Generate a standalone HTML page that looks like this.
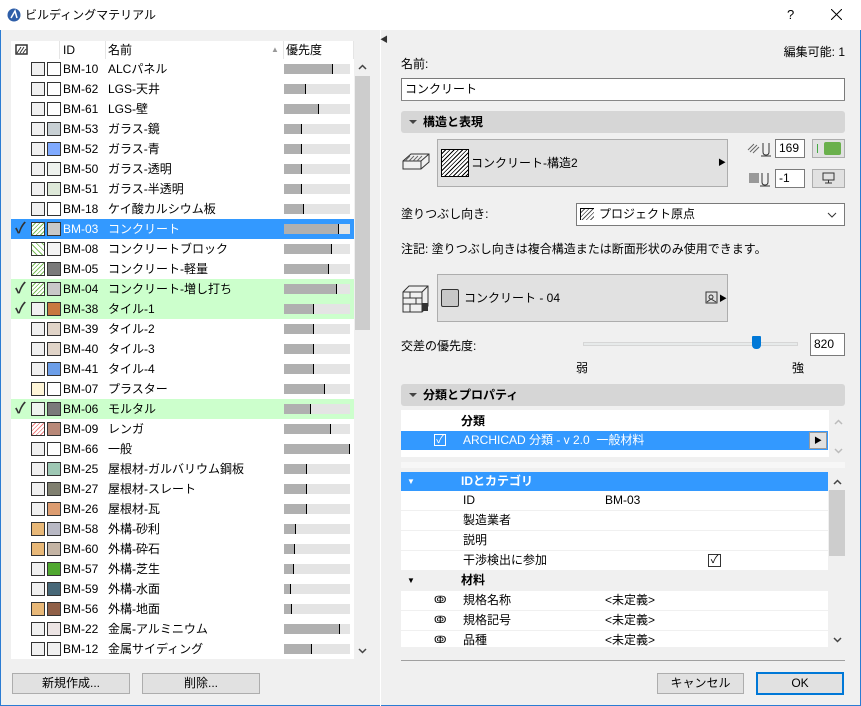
<!DOCTYPE html>
<html><head><meta charset="utf-8"><style>
*{margin:0;padding:0;box-sizing:border-box}
body{width:861px;height:706px;overflow:hidden;background:#f0f0f0;font-family:"Liberation Sans","Noto Sans CJK JP",sans-serif;font-size:12px;color:#000;position:relative}
.a{position:absolute;line-height:16px;white-space:nowrap}
#win{position:absolute;left:0;top:0;width:861px;height:706px;border:1px solid #2b7cd3;border-top:none}
.r{position:absolute;left:11px;width:343px;height:20px}
.ck{position:absolute;left:4px;top:1px;font-size:15px;line-height:18px;color:#333;font-weight:bold}
.s{position:absolute;top:3px;width:14px;height:14px;border:1px solid #333;background:#f0f0f0}
.s1{left:20px}.s2{left:36px}
.id{position:absolute;left:52px;top:2px;line-height:16px}
.nm{position:absolute;left:97px;top:2px;line-height:16px;white-space:nowrap}
.bar{position:absolute;left:273px;top:5px;width:66px;height:10px;background:#e4e4e4}
.bar i{display:block;height:10px;background:#b0b0b0;border-right:1px solid #000}
.sel{background:#3399ff;color:#fff}.sel .ck{color:#333}
.grn{background:#ccffcc}
.hg{background:repeating-linear-gradient(135deg,#fff 0 2px,#7bbf5a 2px 3px)}
.btn{position:absolute;background:#e1e1e1;border:1px solid #adadad;text-align:center;line-height:18px}
.sec{position:absolute;left:401px;width:444px;height:22px;background:#d6d6d6;border-radius:3px;font-weight:bold;line-height:22px;padding-left:22px}
.sec:before{content:"";position:absolute;left:8px;top:9px;border:4px solid transparent;border-top:4px solid #444}
.pr{position:absolute;left:401px;width:427px;height:20px;background:#fff;border-bottom:1px solid #f0f0f0;line-height:19px}
.pr span{position:absolute}
.up,.dn{position:absolute}
</style></head><body>
<div id="win"></div>
<div style="position:absolute;left:0;top:0;width:861px;height:30px;background:#fff"></div>
<svg class="a" style="left:7px;top:8px" width="14" height="14"><circle cx="7" cy="7" r="6.5" fill="#2e5ea8"/><path d="M4 10 L8 3 L10 10" stroke="#fff" stroke-width="1.5" fill="none"/></svg>
<div class="a" style="left:25px;top:7px">ビルディングマテリアル</div>
<div class="a" style="left:787px;top:7px;font-size:13px">?</div>
<svg class="a" style="left:831px;top:9px" width="11" height="11"><path d="M0 0L11 11M11 0L0 11" stroke="#000" stroke-width="1"/></svg>

<!-- left list -->
<div style="position:absolute;left:11px;top:41px;width:343px;height:618px;background:#fff"></div>
<div style="position:absolute;left:355px;top:59px;width:15px;height:600px;background:#f0f0f0"></div>
<div style="position:absolute;left:355px;top:76px;width:15px;height:254px;background:#cdcdcd"></div>
<svg class="up" style="left:358px;top:64px" width="9" height="6"><path d="M1 5L4.5 1.5L8 5" stroke="#444" stroke-width="1.5" fill="none"/></svg>
<svg class="dn" style="left:358px;top:648px" width="9" height="6"><path d="M1 1L4.5 4.5L8 1" stroke="#444" stroke-width="1.5" fill="none"/></svg>
<div style="position:absolute;left:11px;top:41px;width:343px;height:18px;background:#fff"></div>
<svg class="a" style="left:15px;top:44px" width="13" height="11"><rect x="1" y="1" width="11" height="9" fill="none" stroke="#333" stroke-width="1.5"/><path d="M2 9L6 3M5 9L9 3M8 9L11 5" stroke="#333"/></svg>
<div class="a" style="left:63px;top:42px">ID</div>
<div class="a" style="left:108px;top:42px">名前</div>
<div class="a" style="left:271px;top:42px;font-size:8px;color:#999">▲</div>
<div class="a" style="left:286px;top:42px">優先度</div>
<div style="position:absolute;left:59px;top:41px;width:1px;height:18px;background:#e5e5e5"></div>
<div style="position:absolute;left:105px;top:41px;width:1px;height:18px;background:#e5e5e5"></div>
<div style="position:absolute;left:283px;top:41px;width:1px;height:18px;background:#e5e5e5"></div>
<div style="position:absolute;left:353px;top:41px;width:1px;height:18px;background:#e5e5e5"></div>

<div class="r" style="top:59px"><div class="s s1"></div><div class="s s2" style="background:#fff"></div><div class="id">BM-10</div><div class="nm">ALCパネル</div><div class="bar"><i style="width:49px"></i></div></div>
<div class="r" style="top:79px"><div class="s s1"></div><div class="s s2" style="background:#fff"></div><div class="id">BM-62</div><div class="nm">LGS-天井</div><div class="bar"><i style="width:22px"></i></div></div>
<div class="r" style="top:99px"><div class="s s1"></div><div class="s s2" style="background:#fff"></div><div class="id">BM-61</div><div class="nm">LGS-壁</div><div class="bar"><i style="width:35px"></i></div></div>
<div class="r" style="top:119px"><div class="s s1"></div><div class="s s2" style="background:#c8d0d4"></div><div class="id">BM-53</div><div class="nm">ガラス-鏡</div><div class="bar"><i style="width:18px"></i></div></div>
<div class="r" style="top:139px"><div class="s s1"></div><div class="s s2" style="background:#80aaff"></div><div class="id">BM-52</div><div class="nm">ガラス-青</div><div class="bar"><i style="width:18px"></i></div></div>
<div class="r" style="top:159px"><div class="s s1"></div><div class="s s2" style="background:#eef2ee"></div><div class="id">BM-50</div><div class="nm">ガラス-透明</div><div class="bar"><i style="width:18px"></i></div></div>
<div class="r" style="top:179px"><div class="s s1"></div><div class="s s2" style="background:#dde8d8"></div><div class="id">BM-51</div><div class="nm">ガラス-半透明</div><div class="bar"><i style="width:18px"></i></div></div>
<div class="r" style="top:199px"><div class="s s1"></div><div class="s s2" style="background:#fff"></div><div class="id">BM-18</div><div class="nm">ケイ酸カルシウム板</div><div class="bar"><i style="width:20px"></i></div></div>
<div class="r sel" style="top:219px"><div class="ck">✓</div><div class="s s1 hg"></div><div class="s s2" style="background:#c8c8c8"></div><div class="id">BM-03</div><div class="nm">コンクリート</div><div class="bar"><i style="width:55px"></i></div></div>
<div class="r" style="top:239px"><div class="s s1" style="background:repeating-linear-gradient(45deg,#fff 0 3px,#7bbf5a 3px 4px),#fff"></div><div class="s s2" style="background:#f4f4f4"></div><div class="id">BM-08</div><div class="nm">コンクリートブロック</div><div class="bar"><i style="width:48px"></i></div></div>
<div class="r" style="top:259px"><div class="s s1 hg"></div><div class="s s2" style="background:#7a7a7a"></div><div class="id">BM-05</div><div class="nm">コンクリート-軽量</div><div class="bar"><i style="width:45px"></i></div></div>
<div class="r grn" style="top:279px"><div class="ck">✓</div><div class="s s1 hg"></div><div class="s s2" style="background:#c8c8c8"></div><div class="id">BM-04</div><div class="nm">コンクリート-増し打ち</div><div class="bar"><i style="width:53px"></i></div></div>
<div class="r grn" style="top:299px"><div class="ck">✓</div><div class="s s1"></div><div class="s s2" style="background:#c87840"></div><div class="id">BM-38</div><div class="nm">タイル-1</div><div class="bar"><i style="width:30px"></i></div></div>
<div class="r" style="top:319px"><div class="s s1"></div><div class="s s2" style="background:#e0d4c8"></div><div class="id">BM-39</div><div class="nm">タイル-2</div><div class="bar"><i style="width:30px"></i></div></div>
<div class="r" style="top:339px"><div class="s s1"></div><div class="s s2" style="background:#e0d4c8"></div><div class="id">BM-40</div><div class="nm">タイル-3</div><div class="bar"><i style="width:30px"></i></div></div>
<div class="r" style="top:359px"><div class="s s1"></div><div class="s s2" style="background:#6c9ee8"></div><div class="id">BM-41</div><div class="nm">タイル-4</div><div class="bar"><i style="width:30px"></i></div></div>
<div class="r" style="top:379px"><div class="s s1" style="background:#fff6d8"></div><div class="s s2" style="background:#fff"></div><div class="id">BM-07</div><div class="nm">プラスター</div><div class="bar"><i style="width:41px"></i></div></div>
<div class="r grn" style="top:399px"><div class="ck">✓</div><div class="s s1" style="background:#eef4ee"></div><div class="s s2" style="background:#7a7a7a"></div><div class="id">BM-06</div><div class="nm">モルタル</div><div class="bar"><i style="width:27px"></i></div></div>
<div class="r" style="top:419px"><div class="s s1" style="background:repeating-linear-gradient(135deg,#fff 0 2px,#f08080 2px 3px)"></div><div class="s s2" style="background:#b88878"></div><div class="id">BM-09</div><div class="nm">レンガ</div><div class="bar"><i style="width:47px"></i></div></div>
<div class="r" style="top:439px"><div class="s s1"></div><div class="s s2" style="background:#fff"></div><div class="id">BM-66</div><div class="nm">一般</div><div class="bar"><i style="width:66px"></i></div></div>
<div class="r" style="top:459px"><div class="s s1"></div><div class="s s2" style="background:#9ec8b4"></div><div class="id">BM-25</div><div class="nm">屋根材-ガルバリウム鋼板</div><div class="bar"><i style="width:23px"></i></div></div>
<div class="r" style="top:479px"><div class="s s1"></div><div class="s s2" style="background:#808070"></div><div class="id">BM-27</div><div class="nm">屋根材-スレート</div><div class="bar"><i style="width:23px"></i></div></div>
<div class="r" style="top:499px"><div class="s s1"></div><div class="s s2" style="background:#dc9c70"></div><div class="id">BM-26</div><div class="nm">屋根材-瓦</div><div class="bar"><i style="width:23px"></i></div></div>
<div class="r" style="top:519px"><div class="s s1" style="background:#e8b878"></div><div class="s s2" style="background:#b8b8c4"></div><div class="id">BM-58</div><div class="nm">外構-砂利</div><div class="bar"><i style="width:12px"></i></div></div>
<div class="r" style="top:539px"><div class="s s1" style="background:#e8b878"></div><div class="s s2" style="background:#c4b4a4"></div><div class="id">BM-60</div><div class="nm">外構-砕石</div><div class="bar"><i style="width:11px"></i></div></div>
<div class="r" style="top:559px"><div class="s s1"></div><div class="s s2" style="background:#50a830"></div><div class="id">BM-57</div><div class="nm">外構-芝生</div><div class="bar"><i style="width:10px"></i></div></div>
<div class="r" style="top:579px"><div class="s s1"></div><div class="s s2" style="background:#486878"></div><div class="id">BM-59</div><div class="nm">外構-水面</div><div class="bar"><i style="width:7px"></i></div></div>
<div class="r" style="top:599px"><div class="s s1" style="background:#e8b878"></div><div class="s s2" style="background:#906048"></div><div class="id">BM-56</div><div class="nm">外構-地面</div><div class="bar"><i style="width:8px"></i></div></div>
<div class="r" style="top:619px"><div class="s s1"></div><div class="s s2" style="background:#ece4e4"></div><div class="id">BM-22</div><div class="nm">金属-アルミニウム</div><div class="bar"><i style="width:56px"></i></div></div>
<div class="r" style="top:639px"><div class="s s1"></div><div class="s s2" style="background:#f0f0f0"></div><div class="id">BM-12</div><div class="nm">金属サイディング</div><div class="bar"><i style="width:28px"></i></div></div>

<div class="btn" style="left:12px;top:673px;width:118px;height:21px">新規作成...</div>
<div class="btn" style="left:142px;top:673px;width:118px;height:21px">削除...</div>

<!-- divider -->
<div style="position:absolute;left:380px;top:30px;width:1px;height:676px;background:#fff"></div>
<div class="a" style="left:380px;top:32px;font-size:8px;color:#333">◀</div>

<!-- right -->
<div class="a" style="left:775px;top:44px;width:70px;text-align:right">編集可能: 1</div>
<div class="a" style="left:401px;top:56px">名前:</div>
<div style="position:absolute;left:401px;top:78px;width:444px;height:23px;background:#fff;border:1px solid #7a7a7a;padding-left:3px;line-height:20px">コンクリート</div>
<div style="position:absolute;left:401px;top:100px;width:444px;height:1px;background:#888"></div>
<div class="sec" style="top:111px">構造と表現</div>

<svg class="a" style="left:401px;top:152px" width="30" height="25"><path d="M2 9L10 2H28V10L20 17H2Z M2 9H20L28 2 M20 9V17" fill="none" stroke="#333"/><path d="M4 9L9 4M8 9L13 4M12 9L17 4M16 9L21 4" stroke="#666"/></svg>
<div class="btn" style="left:437px;top:139px;width:291px;height:48px"></div>
<div style="position:absolute;left:441px;top:149px;width:28px;height:28px;border:1px solid #000;background:repeating-linear-gradient(135deg,#fff 0 2px,#000 2px 3px)"></div>
<div class="a" style="left:471px;top:155px">コンクリート-構造2</div>
<div class="a" style="left:718px;top:155px;font-size:8px">▶</div>
<svg class="a" style="left:747px;top:141px" width="28" height="16"><path d="M1 9L7 3M3 11L10 4M6 12L12 6" stroke="#666"/><path d="M16 2V11Q16 14 19 14Q22 14 22 11V2M14 15H24" stroke="#333" fill="none"/></svg>
<div style="position:absolute;left:775px;top:139px;width:30px;height:19px;background:#fff;border:1px solid #7a7a7a;padding-left:3px;line-height:17px">169</div>
<div class="btn" style="left:812px;top:139px;width:33px;height:19px"></div>
<div style="position:absolute;left:817px;top:144px;width:1px;height:9px;background:#4a4"></div>
<div style="position:absolute;left:824px;top:142px;width:17px;height:13px;background:#6ab04c;border-radius:2px"></div>
<div style="position:absolute;left:749px;top:173px;width:10px;height:10px;background:#999"></div>
<svg class="a" style="left:759px;top:171px" width="16" height="16"><path d="M3 2V11Q3 14 6 14Q9 14 9 11V2M1 15H11" stroke="#333" fill="none"/></svg>
<div style="position:absolute;left:775px;top:169px;width:30px;height:19px;background:#fff;border:1px solid #7a7a7a;padding-left:3px;line-height:17px">-1</div>
<div class="btn" style="left:812px;top:169px;width:33px;height:19px"></div>
<svg class="a" style="left:822px;top:172px" width="13" height="12"><rect x="1" y="1" width="11" height="7" fill="none" stroke="#333"/><path d="M6.5 8V11M3 11H10" stroke="#333"/></svg>

<div class="a" style="left:401px;top:206px">塗りつぶし向き:</div>
<div style="position:absolute;left:576px;top:203px;width:269px;height:23px;background:#fff;border:1px solid #7a7a7a;line-height:21px;padding-left:22px">プロジェクト原点</div>
<div style="position:absolute;left:580px;top:208px;width:14px;height:12px;background:repeating-linear-gradient(135deg,#fff 0 2px,#555 2px 3px);border-top:1px solid #000;border-left:1px solid #000"></div>
<svg class="a" style="left:827px;top:212px" width="10" height="6"><path d="M1 1L5 5L9 1" stroke="#333" fill="none"/></svg>
<div class="a" style="left:401px;top:241px">注記: 塗りつぶし向きは複合構造または断面形状のみ使用できます。</div>

<svg class="a" style="left:402px;top:284px" width="28" height="30"><path d="M1 8L7 2H26V22L20 28H1Z M1 8H20V28 M20 8L26 2 M1 14H20M1 20H20M8 8V14M14 14V20M8 20V28" fill="none" stroke="#333"/><rect x="20" y="19" width="6" height="8" fill="#333"/></svg>
<div class="btn" style="left:437px;top:274px;width:291px;height:48px"></div>
<div style="position:absolute;left:441px;top:289px;width:18px;height:18px;border:1px solid #333;background:#c8c8c8;border-radius:2px"></div>
<div class="a" style="left:464px;top:290px">コンクリート - 04</div>
<svg class="a" style="left:705px;top:291px" width="13" height="13"><rect x="1" y="1" width="11" height="11" fill="none" stroke="#333"/><circle cx="6" cy="6" r="2" fill="none" stroke="#333"/><path d="M2 11L6 8L11 11" stroke="#333" fill="none"/></svg>
<div class="a" style="left:719px;top:291px;font-size:8px">▶</div>

<div class="a" style="left:401px;top:338px">交差の優先度:</div>
<div style="position:absolute;left:583px;top:342px;width:215px;height:4px;background:#e7eaea;border:1px solid #d6d6d6"></div>
<div style="position:absolute;left:752px;top:336px;width:9px;height:13px;background:#0078d7;border-radius:1px 1px 4px 4px"></div>
<div style="position:absolute;left:810px;top:333px;width:35px;height:23px;background:#fff;border:1px solid #7a7a7a;line-height:21px;padding-left:3px">820</div>
<div class="a" style="left:576px;top:360px">弱</div>
<div class="a" style="left:792px;top:360px">強</div>

<div class="sec" style="top:384px">分類とプロパティ</div>
<div style="position:absolute;left:401px;top:410px;width:428px;height:47px;background:#fff"></div>
<div class="a" style="left:461px;top:413px;font-weight:bold">分類</div>
<div style="position:absolute;left:401px;top:431px;width:427px;height:19px;background:#3399ff"></div>
<div style="position:absolute;left:434px;top:434px;width:12px;height:12px;border:1px solid #fff;color:#fff;font-size:11px;line-height:10px;text-align:center">✓</div>
<div class="a" style="left:463px;top:432px;color:#fff">ARCHICAD 分類 - v 2.0&nbsp; 一般材料</div>
<div style="position:absolute;left:809px;top:432px;width:18px;height:17px;background:#e1e1e1;border:1px solid #999;font-size:8px;text-align:center;line-height:15px">▶</div>
<svg class="up" style="left:834px;top:419px" width="9" height="6"><path d="M1 5L4.5 1.5L8 5" stroke="#bbb" stroke-width="1.5" fill="none"/></svg>
<svg class="dn" style="left:834px;top:448px" width="9" height="6"><path d="M1 1L4.5 4.5L8 1" stroke="#bbb" stroke-width="1.5" fill="none"/></svg>
<div style="position:absolute;left:401px;top:462px;width:444px;height:6px;background:#f7f7f7"></div>

<div style="position:absolute;left:401px;top:472px;width:427px;height:19px;background:#3399ff;color:#fff;font-weight:bold;line-height:19px"><span style="position:absolute;left:6px;font-size:8px">▼</span><span style="position:absolute;left:60px">IDとカテゴリ</span></div>
<div class="pr" style="top:491px"><span style="left:62px">ID</span><span style="left:204px">BM-03</span></div>
<div class="pr" style="top:511px"><span style="left:62px">製造業者</span></div>
<div class="pr" style="top:531px"><span style="left:62px">説明</span></div>
<div class="pr" style="top:551px"><span style="left:62px">干渉検出に参加</span><span style="left:307px;top:3px;width:13px;height:13px;border:1px solid #333;line-height:11px;text-align:center;font-size:11px">✓</span></div>
<div class="pr" style="top:571px;background:#f0f0f0;font-weight:bold"><span style="left:6px;font-size:8px;font-weight:normal">▼</span><span style="left:60px">材料</span></div>
<div class="pr" style="top:591px"><span style="left:33px;font-size:10px">ↂ</span><span style="left:62px">規格名称</span><span style="left:204px">&lt;未定義&gt;</span></div>
<div class="pr" style="top:611px"><span style="left:33px;font-size:10px">ↂ</span><span style="left:62px">規格記号</span><span style="left:204px">&lt;未定義&gt;</span></div>
<div class="pr" style="top:631px;height:17px;overflow:hidden"><span style="left:33px;font-size:10px">ↂ</span><span style="left:62px">品種</span><span style="left:204px">&lt;未定義&gt;</span></div>
<div style="position:absolute;left:829px;top:472px;width:16px;height:176px;background:#f0f0f0"></div>
<div style="position:absolute;left:829px;top:490px;width:16px;height:66px;background:#cdcdcd"></div>
<svg class="up" style="left:833px;top:479px" width="9" height="6"><path d="M1 5L4.5 1.5L8 5" stroke="#444" stroke-width="1.5" fill="none"/></svg>
<svg class="dn" style="left:833px;top:637px" width="9" height="6"><path d="M1 1L4.5 4.5L8 1" stroke="#444" stroke-width="1.5" fill="none"/></svg>

<div style="position:absolute;left:401px;top:660px;width:444px;height:1px;background:#a0a0a0"></div>
<div class="btn" style="left:657px;top:673px;width:87px;height:21px">キャンセル</div>
<div class="btn" style="left:756px;top:672px;width:88px;height:23px;border:2px solid #0078d7;line-height:19px">OK</div>
</body></html>
